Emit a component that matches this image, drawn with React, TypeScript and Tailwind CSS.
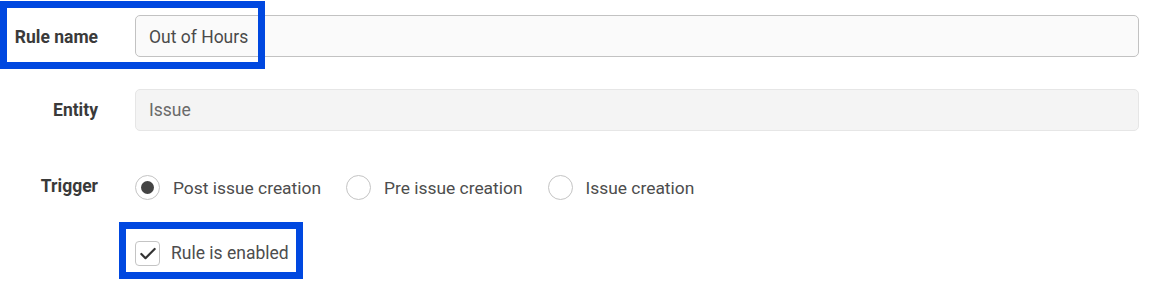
import { Check } from "lucide-react";

const Radio = ({ label, checked }: { label: string; checked?: boolean }) => (
  <label className="flex items-center gap-[13px]">
    <span className="w-[25px] h-[25px] rounded-full border border-[#c4c4c4] bg-white flex items-center justify-center">
      {checked && <span className="w-[13px] h-[13px] rounded-full bg-[#444]"></span>}
    </span>
    <span className="text-[17.4px] text-[#4d4d4d] pt-[1px]">{label}</span>
  </label>
);

const App = () => {
  return (
    <div className="relative w-[1157px] h-[285px] bg-white font-['Roboto',sans-serif]">
      <div className="flex flex-col pt-[15px]">
        <div className="flex items-center h-[42px]">
          <div className="w-[98px] text-right font-bold text-[17.5px] text-[#3a3a3a] pt-[2px]">Rule name</div>
          <div className="ml-[37px] w-[1004px] h-[42px] rounded-[5px] border border-[#c2c2c2] bg-[#fafafa] flex items-center px-[13px] pt-[2px] text-[17.5px] text-[#4a4a4a]">
            Out of Hours
          </div>
        </div>

        <div className="flex items-center h-[42px] mt-[32px]">
          <div className="w-[98px] text-right font-bold text-[17.5px] text-[#3a3a3a] pt-[1px]">Entity</div>
          <div className="ml-[37px] w-[1004px] h-[42px] rounded-[5px] border border-[#e6e6e6] bg-[#f4f4f4] flex items-center px-[13px] pt-[1px] text-[17.5px] text-[#6a6a6a]">
            Issue
          </div>
        </div>

        <div className="flex items-center h-[25px] mt-[44px]">
          <div className="w-[98px] text-right font-bold text-[17.5px] text-[#3a3a3a] -mt-[3px]">Trigger</div>
          <div className="ml-[37px] flex items-center gap-[25px]">
            <Radio label="Post issue creation" checked />
            <Radio label="Pre issue creation" />
            <Radio label="Issue creation" />
          </div>
        </div>

        <div className="flex items-center h-[25px] mt-[41px] ml-[135px] gap-[11px]">
          <span className="w-[25px] h-[25px] rounded-[4px] border border-[#c4c4c4] bg-white flex items-center justify-center">
            <Check size={20} strokeWidth={2.6} className="text-[#333]" />
          </span>
          <span className="text-[17.5px] text-[#4d4d4d]">Rule is enabled</span>
        </div>
      </div>

      {/* annotation boxes */}
      <div className="absolute left-0 top-[1px] w-[265px] h-[68px] border-[7px] border-[#0048e0]"></div>
      <div className="absolute left-[119px] top-[222px] w-[184px] h-[57px] border-[7px] border-[#0048e0]"></div>
    </div>
  );
};

export default App;
